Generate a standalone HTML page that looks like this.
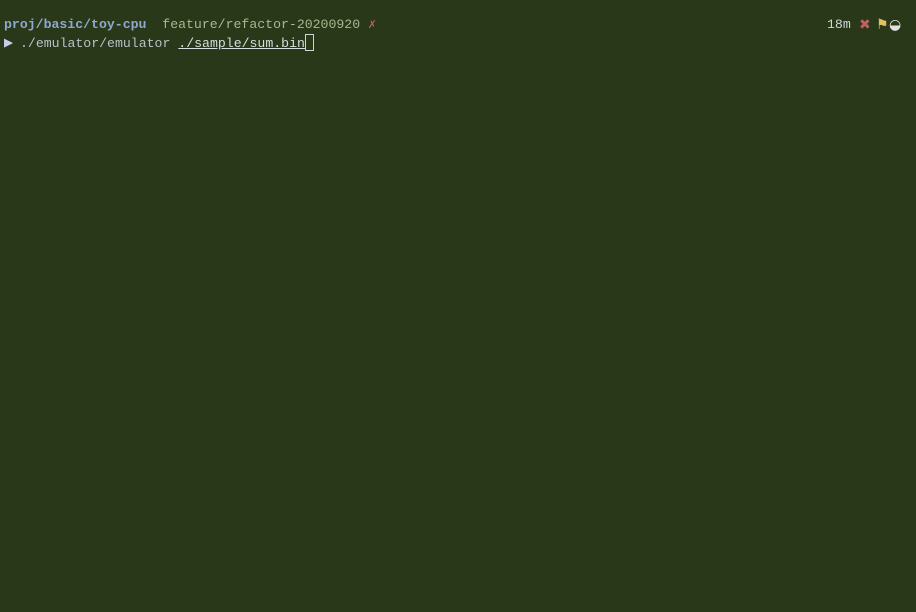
<!DOCTYPE html>
<html><head><style>
body{margin:0;width:916px;height:612px;background:#283818;overflow:hidden;font-family:"Liberation Mono","DejaVu Sans Mono",monospace;font-size:13.2px;}
.l{position:absolute;left:4px;white-space:pre;line-height:18px;}
.i{position:absolute;top:16px;line-height:18px;font-family:"DejaVu Sans",sans-serif;font-size:14px;}
</style></head><body>
<div class="l" style="top:16px"><span style="color:#8fa8d0;font-weight:bold">proj/basic/toy-cpu</span>  <span style="color:#a8b890">feature/refactor-20200920</span> <span style="color:#b06060">✗</span></div>
<div class="l" style="top:34px"><span style="color:#c8d0f0;font-size:15px;display:inline-block;width:16px">▶</span><span style="color:#b8c0c8">./emulator/emulator</span> <span style="color:#d8dce0;text-decoration:underline">./sample/sum.bin</span><span style="display:inline-block;width:9px;height:17px;border:1px solid #d0d4d8;vertical-align:-4px;box-sizing:border-box"></span></div>
<div class="l" style="top:16px;left:827px;color:#d0d4d8">18m</div>
<div class="i" style="left:859px;color:#c06060">✖</div>
<div class="i" style="left:876px;color:#e0c060">⚑</div>
<div class="i" style="left:889px;color:#e0e0e0">◒</div>
</body></html>
